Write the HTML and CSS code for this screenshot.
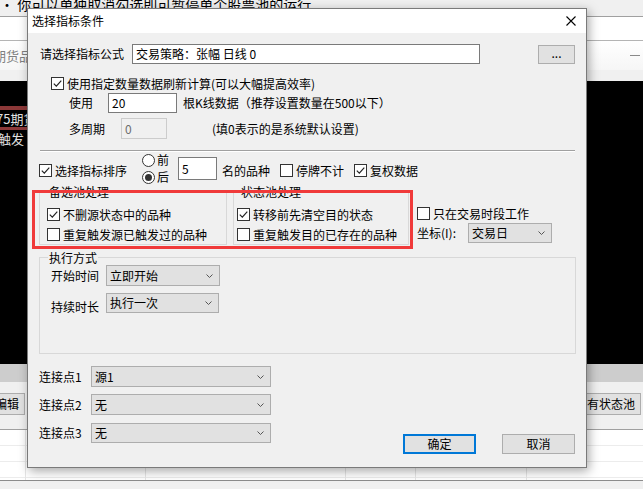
FILE: index.html
```html
<!DOCTYPE html>
<html>
<head>
<meta charset="utf-8">
<link rel="stylesheet" href="styles.css">
</head>
<body>
<div class="screen">
  <div class="bg-top"><span class="bg-note">• 你可以单独取消勾选即可暂停单个股票池的运行</span></div>
  <div class="bg-row1"></div>
  <div class="bg-row2"><span class="bg-fut">期货品</span><span class="bg-dash"></span></div>
  <div class="bg-row3"></div>
  <div class="bg-black">
    <div class="bg-red"></div>
    <div class="bg-cell c-fut">75期货</div>
    <div class="bg-red thin"></div>
    <div class="bg-cell c-trig">触发</div>
  </div>
  <div class="bg-gray"></div>
  <div class="bg-toolbar">
    <div class="bg-btn left">批量编辑</div>
    <div class="bg-btn right">所有状态池</div>
  </div>
  <div class="bg-grid">
    <div class="gc c1"></div><div class="gc c2"></div><div class="gc c3"></div><div class="gc c4"></div><div class="gc c5"></div><div class="gc c6"></div>
  </div>
  <div class="bg-foot"></div>
</div>

<div class="dialog">
  <div class="titlebar">
    <span class="title">选择指标条件</span>
    <svg class="close" viewBox="0 0 10 10" width="10" height="10"><path d="M0.5 0.5 L9.5 9.5 M9.5 0.5 L0.5 9.5" stroke="#000" stroke-width="1.1" fill="none"/></svg>
  </div>
  <div class="body">
    <div class="row r-formula">
      <span class="lbl w-formula">请选择指标公式</span>
      <div class="edit formula">交易策略：张幅 日线 0</div>
      <div class="btn dots">...</div>
    </div>

    <div class="row r-use">
      <span class="chk"><span class="cb"><svg viewBox="0 0 11 11" width="11" height="11"><polyline points="1.8,5.6 4.3,8.1 9.3,2.6" fill="none" stroke="#222" stroke-width="1.2"/></svg></span><span>使用指定数量数据刷新计算(可以大幅提高效率)</span></span>
    </div>

    <div class="row r-count">
      <span class="lbl w-use">使用</span>
      <div class="edit cnt">20</div>
      <span class="txt t-count">根K线数据（推荐设置数量在500以下）</span>
    </div>

    <div class="row r-period">
      <span class="lbl w-period">多周期</span>
      <div class="edit dis">0</div>
      <span class="txt t-period">(填0表示的是系统默认设置)</span>
    </div>

    <div class="sep"></div>

    <div class="row r-sort">
      <span class="chk s-sort"><span class="cb"><svg viewBox="0 0 11 11" width="11" height="11"><polyline points="1.8,5.6 4.3,8.1 9.3,2.6" fill="none" stroke="#222" stroke-width="1.2"/></svg></span><span>选择指标排序</span></span>
      <div class="radios">
        <span class="rad"><span class="rb"></span><span>前</span></span>
        <span class="rad"><span class="rb on"></span><span>后</span></span>
      </div>
      <div class="edit top5">5</div>
      <span class="chk s-name"><span>名的品种</span></span>
      <span class="chk s-stop"><span class="cb"></span><span>停牌不计</span></span>
      <span class="chk s-adj"><span class="cb"><svg viewBox="0 0 11 11" width="11" height="11"><polyline points="1.8,5.6 4.3,8.1 9.3,2.6" fill="none" stroke="#222" stroke-width="1.2"/></svg></span><span>复权数据</span></span>
    </div>

    <div class="row r-pools">
      <div class="group g1">
        <span class="legend">备选池处理</span>
        <span class="chk gi first"><span class="cb"><svg viewBox="0 0 11 11" width="11" height="11"><polyline points="1.8,5.6 4.3,8.1 9.3,2.6" fill="none" stroke="#222" stroke-width="1.2"/></svg></span><span>不删源状态中的品种</span></span>
        <span class="chk gi"><span class="cb"></span><span>重复触发源已触发过的品种</span></span>
      </div>
      <div class="group g2">
        <span class="legend">状态池处理</span>
        <span class="chk gi first"><span class="cb"><svg viewBox="0 0 11 11" width="11" height="11"><polyline points="1.8,5.6 4.3,8.1 9.3,2.6" fill="none" stroke="#222" stroke-width="1.2"/></svg></span><span>转移前先清空目的状态</span></span>
        <span class="chk gi"><span class="cb"></span><span>重复触发目的已存在的品种</span></span>
      </div>
      <div class="side">
        <span class="chk"><span class="cb"></span><span>只在交易时段工作</span></span>
        <div class="row r-axis">
          <span class="lbl w-axis">坐标(I):</span>
          <div class="select s-axis"><span>交易日</span><svg viewBox="0 0 7 4" width="7" height="4"><polyline points="0.5,0.5 3.5,3.5 6.5,0.5" fill="none" stroke="#555" stroke-width="1"/></svg></div>
        </div>
      </div>
      <div class="redbox"></div>
    </div>

    <div class="group exec">
      <span class="legend">执行方式</span>
      <div class="row r-start">
        <span class="lbl w-exec l-start">开始时间</span>
        <div class="select s-start"><span>立即开始</span><svg viewBox="0 0 7 4" width="7" height="4"><polyline points="0.5,0.5 3.5,3.5 6.5,0.5" fill="none" stroke="#555" stroke-width="1"/></svg></div>
      </div>
      <div class="row r-dur">
        <span class="lbl w-exec l-dur">持续时长</span>
        <div class="select s-dur"><span>执行一次</span><svg viewBox="0 0 7 4" width="7" height="4"><polyline points="0.5,0.5 3.5,3.5 6.5,0.5" fill="none" stroke="#555" stroke-width="1"/></svg></div>
      </div>
    </div>

    <div class="bottom">
      <div class="links">
        <div class="row r-link l1">
          <span class="lbl w-link">连接点1</span>
          <div class="select s-link"><span>源1</span><svg viewBox="0 0 7 4" width="7" height="4"><polyline points="0.5,0.5 3.5,3.5 6.5,0.5" fill="none" stroke="#555" stroke-width="1"/></svg></div>
        </div>
        <div class="row r-link l2">
          <span class="lbl w-link">连接点2</span>
          <div class="select s-link"><span>无</span><svg viewBox="0 0 7 4" width="7" height="4"><polyline points="0.5,0.5 3.5,3.5 6.5,0.5" fill="none" stroke="#555" stroke-width="1"/></svg></div>
        </div>
        <div class="row r-link l3">
          <span class="lbl w-link">连接点3</span>
          <div class="select s-link short"><span>无</span><svg viewBox="0 0 7 4" width="7" height="4"><polyline points="0.5,0.5 3.5,3.5 6.5,0.5" fill="none" stroke="#555" stroke-width="1"/></svg></div>
        </div>
      </div>
      <div class="actions">
        <div class="btn act ok">确定</div>
        <div class="btn act cancel">取消</div>
      </div>
    </div>
  </div>
</div>
</body>
</html>
```

FILE: styles.css
```css
* { box-sizing: border-box; }
html, body { margin: 0; padding: 0; }
body {
  width: 643px;
  height: 489px;
  overflow: hidden;
  position: relative;
  font-family: "Noto Sans CJK SC", "Microsoft YaHei", sans-serif;
  font-size: 12px;
  line-height: 16px;
  color: #000;
  background: #f0f0f0;
}

/* ---------- background application ---------- */
.screen { width: 643px; height: 489px; display: flex; flex-direction: column; }
.bg-top { height: 17px; flex: none; background: #f0f0f0; border-bottom: 1px solid #a0a0a0; overflow: hidden; }
.bg-note { display: block; font-size: 14px; line-height: 14px; margin-top: -3px; padding-left: 0; white-space: nowrap; color: #000; }
.bg-row1 { height: 24px; flex: none; background: #fff; border-bottom: 1px solid #b4b4b4; }
.bg-row2 { height: 29px; flex: none; background: linear-gradient(#ffffff, #f6f6f6); display: flex; align-items: center; justify-content: space-between; overflow: hidden; }
.bg-fut { font-size: 13px; color: #808080; margin-left: -7px; white-space: nowrap; }
.bg-dash { width: 10px; height: 1px; background: #8a8a8a; margin-right: 3px; }
.bg-row3 { height: 11px; flex: none; background: #f0f0f0; }
.bg-black { height: 283px; flex: none; background: #000; overflow: hidden; }
.bg-red { margin-top: 25px; height: 4px; width: 200px; background: #8c3838; }
.bg-red.thin { margin-top: 0; height: 3px; }
.bg-cell { height: 17px; line-height: 17px; font-size: 13px; color: #e0e0e0; white-space: nowrap; }
.c-fut { margin-left: -4px; }
.c-trig { margin-left: -2px; }
.bg-gray { height: 18px; flex: none; background: #cdcdcd; }
.bg-toolbar { height: 48px; flex: none; background: #f0f0f0; border-bottom: 1px solid #a0a0a0; display: flex; justify-content: space-between; align-items: flex-start; padding-top: 11px; overflow: hidden; }
.bg-btn { height: 22px; border: 1px solid #adadad; background: #e1e1e1; line-height: 20px; padding: 0 5px; white-space: nowrap; }
.bg-btn.left { margin-left: -35px; }
.bg-btn.right { margin-right: 2px; }
.bg-grid { height: 51px; flex: none; background: #fff repeating-linear-gradient(to bottom, transparent 0 15px, #ececec 15px 16px); border-bottom: 1px solid #8c8c8c; display: flex; }
.gc { height: 100%; border-right: 1px solid #e6e6e6; }
.c1 { width: 26px; } .c2 { width: 120px; } .c3 { width: 200px; } .c4 { width: 70px; } .c5 { width: 111px; } .c6 { flex: 1; border-right: 0; }
.bg-foot { flex: 1; background: #f0f0f0; }

/* ---------- dialog ---------- */
.dialog {
  position: absolute;
  left: 27px;
  top: 8px;
  width: 560px;
  height: 460px;
  border: 1px solid #7a7a7a;
  background: #f0f0f0;
  box-shadow: 2px 3px 10px rgba(0, 0, 0, 0.35);
  display: flex;
  flex-direction: column;
}
.titlebar { height: 24px; flex: none; background: #fff; display: flex; align-items: center; justify-content: space-between; padding: 0 10px 0 4px; }
.title { font-size: 12px; }
.close { display: block; }
.body { flex: 1; }

.row { display: flex; }
.lbl { flex: none; white-space: nowrap; }
.txt { white-space: nowrap; }

.edit { flex: none; background: #fff; border: 1px solid #7a7a7a; padding-left: 3px; display: flex; align-items: center; white-space: nowrap; }
.btn { flex: none; background: #e1e1e1; border: 1px solid #adadad; display: flex; align-items: center; justify-content: center; }

.chk { display: inline-flex; align-items: center; height: 13px; gap: 3px; white-space: nowrap; flex: none; }
.cb { width: 13px; height: 13px; flex: none; border: 1px solid #333; background: #fff; display: flex; align-items: center; justify-content: center; }
.cb svg { display: block; }

.rad { display: flex; align-items: center; gap: 2px; height: 14px; }
.rb { width: 13px; height: 13px; flex: none; border: 1px solid #333; border-radius: 50%; background: #fff; display: flex; align-items: center; justify-content: center; }
.rb.on::after { content: ""; width: 7px; height: 7px; border-radius: 50%; background: #333; }

.select { flex: none; background: #e1e1e1; border: 1px solid #adadad; display: flex; align-items: center; justify-content: space-between; padding: 0 6px 0 3px; white-space: nowrap; }
.select svg { display: block; }

/* formula row */
.r-formula { margin-top: 11px; height: 20px; padding-left: 12px; align-items: center; }
.w-formula { width: 92px; }
.formula { width: 348px; height: 20px; }
.dots { width: 37px; height: 19px; margin-left: 58px; align-self: flex-start; margin-top: 1px; line-height: 10px; padding-bottom: 3px; }

.r-use { margin-top: 13px; height: 13px; padding-left: 23px; align-items: center; }

.r-count { margin-top: 3px; height: 20px; padding-left: 41px; align-items: center; }
.w-use { width: 39px; }
.cnt { width: 69px; height: 20px; }
.t-count { margin-left: 6px; }

.r-period { margin-top: 5px; height: 21px; padding-left: 41px; align-items: center; }
.w-period { width: 52px; }
.dis { width: 46px; height: 21px; background: #f0f0f0; border-color: #cccccc; color: #6d6d6d; }
.t-period { margin-left: 45px; }

.sep { margin: 11px 0 0 12px; width: 535px; height: 2px; border-top: 1px solid #a0a0a0; border-bottom: 1px solid #fff; }

/* sort row */
.r-sort { margin-top: 1px; height: 30px; padding-left: 11px; align-items: flex-start; }
.r-sort .chk { margin-top: 11px; }
.radios { display: flex; flex-direction: column; gap: 3px; margin-left: 15px; }
.top5 { width: 39px; height: 23px; margin-left: 9px; margin-top: 4px; }
.s-name { margin-left: 5px; }
.s-stop { margin-left: 10px; }
.s-adj { margin-left: 10px; }

/* pools row */
.r-pools { position: relative; align-items: flex-start; }
.group { position: relative; flex: none; border: 1px solid #d8d8d8; display: flex; flex-direction: column; }
.legend { position: absolute; top: -9px; left: 8px; padding: 0 1px; background: #f0f0f0; white-space: nowrap; }
.g1 { margin-left: 11px; margin-top: 9px; width: 188px; height: 53px; padding-left: 7px; }
.g2 { margin-left: 6px; margin-top: 9px; width: 176px; height: 53px; padding-left: 3px; }
.g2 .legend { left: 6px; }
.gi { margin-top: 7px; }
.gi.first { margin-top: 15px; }
.side { margin-left: 8px; margin-top: 24px; display: flex; flex-direction: column; }
.r-axis { margin-top: 3px; height: 20px; align-items: center; }
.w-axis { width: 51px; }
.s-axis { width: 84px; height: 20px; }
.redbox { position: absolute; left: 4px; top: 7px; width: 381px; height: 59px; border: 3px solid #f03a3a; }

/* exec group */
.exec { margin: 12px 0 0 11px; width: 537px; height: 97px; padding-left: 11px; }
.exec .legend { top: -8px; }
.r-start { margin-top: 7px; align-items: flex-start; }
.r-dur { margin-top: 7px; align-items: flex-start; }
.w-exec { width: 55px; }
.l-start { margin-top: 3px; }
.l-dur { margin-top: 6px; }
.s-start { width: 114px; height: 21px; }
.s-dur { width: 113px; height: 20px; }

/* bottom */
.bottom { display: flex; align-items: flex-start; }
.links { margin-top: 12px; padding-left: 11px; display: flex; flex-direction: column; }
.r-link { height: 21px; align-items: center; }
.l2 { margin-top: 7px; }
.l3 { margin-top: 8px; height: 20px; }
.w-link { width: 52px; }
.s-link { width: 180px; height: 21px; }
.s-link.short { height: 20px; }
.actions { margin-left: auto; margin-right: 11px; margin-top: 80px; display: flex; gap: 26px; }
.act { width: 73px; height: 20px; }
.ok { border: 2px solid #0078d7; }
```
